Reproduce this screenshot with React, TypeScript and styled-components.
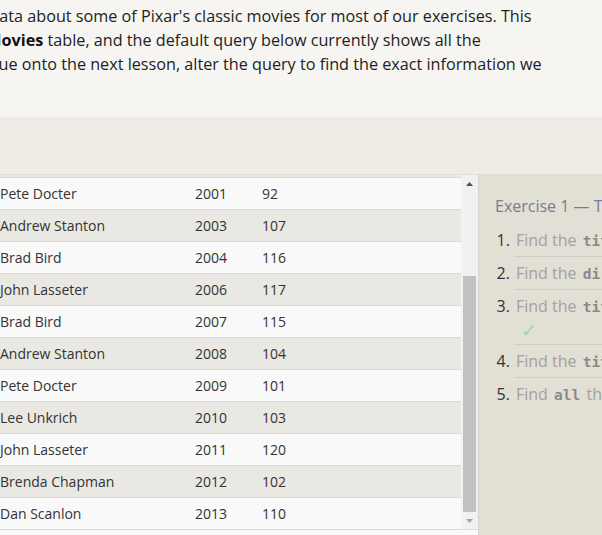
import React from "react";
import styled, { createGlobalStyle } from "styled-components";

const GlobalStyle = createGlobalStyle`
  html, body { margin: 0; padding: 0; background: #f6f5f1; }
  body { font-family: "Open Sans", "Noto Sans", "DejaVu Sans", sans-serif; }
`;

const Page = styled.div`
  width: 100vw;
  height: 535px;
  overflow: hidden;
  display: flex;
  flex-direction: column;
`;

const Intro = styled.section`
  flex: 0 0 117px;
  box-sizing: border-box;
  padding-top: 4px;
  background: #f6f5f1;
  overflow: hidden;
`;

const IntroText = styled.div`
  margin-left: -259px;
  font-size: 16.2px;
  line-height: 24px;
  color: #222;
  strong { color: #111; font-weight: 700; }
`;

const IntroLine = styled.div<{ $shift?: number }>`
  white-space: nowrap;
  margin-left: ${(p) => p.$shift ?? 0}px;
`;

const Band = styled.div`
  flex: 0 0 57px;
  background: #efece5;
  border-bottom: 1px solid #e3e0d8;
`;

const Workspace = styled.div`
  flex: 1;
  display: flex;
  min-height: 0;
`;

const TableArea = styled.div`
  flex: 0 0 478px;
  display: flex;
  flex-direction: column;
  background: #f9f9f9;
`;

const ScrollFrame = styled.div`
  display: flex;
  height: 354px;
`;

const Rows = styled.div`
  flex: 1;
  padding-top: 2px;
  background: #eae8e2;
  overflow: hidden;
`;

const Row = styled.div<{ $alt: boolean }>`
  display: grid;
  grid-template-columns: 195px 67px 1fr;
  height: 32px;
  box-sizing: border-box;
  border-top: 1px solid #dddbd5;
  background: ${(p) => (p.$alt ? "#eae8e2" : "#f9f9f9")};
  font-size: 14px;
  line-height: 31px;
  color: #333;
`;

const Cell = styled.div`
  white-space: nowrap;
  overflow: hidden;
`;

const Scrollbar = styled.div`
  flex: 0 0 17px;
  display: flex;
  flex-direction: column;
  background: #f1f1f1;
`;

const ArrowButton = styled.div`
  flex: 0 0 17px;
  display: flex;
  align-items: center;
  justify-content: center;
`;

const TrackSpace = styled.div`
  flex: 1;
`;

const Thumb = styled.div`
  flex: 0 0 236px;
  margin: 0 2px;
  background: #c1c1c1;
`;

const BelowTable = styled.div`
  flex: 1;
  border-top: 1px solid #dddbd5;
  background: #f9f9f9;
`;

const ExercisePanel = styled.aside`
  flex: 0 0 420px;
  box-sizing: border-box;
  padding: 19px 0 0 17px;
  background: #e2dfd4;
  box-shadow: inset 1px 0 1px rgba(0, 0, 0, 0.05);
`;

const ExerciseTitle = styled.h3`
  margin: 0 0 6px;
  font-size: 16px;
  line-height: 24px;
  font-weight: 400;
  color: #72808e;
  white-space: nowrap;
`;

const TaskList = styled.ol`
  margin: 0;
  padding-left: 19px;
`;

const Task = styled.li`
  padding: 5px 0 5px 2px;
  border-bottom: 1px solid #d0ccc1;
  font-size: 16px;
  line-height: 22px;
  color: #a2a2a2;
  &::marker { color: #333; }
  &:last-child { border-bottom: none; }
`;

const Code = styled.code`
  font-family: "DejaVu Sans Mono", "Liberation Mono", monospace;
  font-weight: 700;
  font-size: 14.5px;
  line-height: 1;
  color: #8a8a8a;
  padding: 0 2px;
`;

const Check = styled.span<{ $ownLine?: boolean }>`
  display: ${(p) => (p.$ownLine ? "block" : "inline")};
  height: ${(p) => (p.$ownLine ? "22px" : "auto")};
  margin-left: ${(p) => (p.$ownLine ? "0" : "6px")};
  padding-left: ${(p) => (p.$ownLine ? "5px" : "0")};
  font-family: "DejaVu Sans", sans-serif;
  font-size: 19px;
  line-height: ${(p) => (p.$ownLine ? "27px" : "1")};
  color: #a3d6a3;
`;

function UpArrow() {
  return (
    <svg width="7" height="4" viewBox="0 0 7 4">
      <polygon points="0,4 7,4 3.5,0" fill="#505050" />
    </svg>
  );
}

function DownArrow() {
  return (
    <svg width="7" height="4" viewBox="0 0 7 4">
      <polygon points="0,0 7,0 3.5,4" fill="#a3a3a3" />
    </svg>
  );
}

const movies = [
  ["Pete Docter", 2001, 92],
  ["Andrew Stanton", 2003, 107],
  ["Brad Bird", 2004, 116],
  ["John Lasseter", 2006, 117],
  ["Brad Bird", 2007, 115],
  ["Andrew Stanton", 2008, 104],
  ["Pete Docter", 2009, 101],
  ["Lee Unkrich", 2010, 103],
  ["John Lasseter", 2011, 120],
  ["Brenda Chapman", 2012, 102],
  ["Dan Scanlon", 2013, 110],
] as const;

export default function App() {
  return (
    <>
      <GlobalStyle />
      <Page>
        <Intro>
          <IntroText>
            <IntroLine>
              We will be using a database with data about some of Pixar's classic movies for most of our exercises. This
            </IntroLine>
            <IntroLine $shift={-6}>
              first exercise will only involve the <strong>Movies</strong> table, and the default query below currently shows all the
            </IntroLine>
            <IntroLine $shift={-9}>
              properties of each movie. To continue onto the next lesson, alter the query to find the exact information we
            </IntroLine>
            <IntroLine>need for each task.</IntroLine>
          </IntroText>
        </Intro>
        <Band />
        <Workspace>
          <TableArea>
            <ScrollFrame>
              <Rows>
                {movies.map(([director, year, length], i) => (
                  <Row key={i} $alt={i % 2 === 1}>
                    <Cell>{director}</Cell>
                    <Cell>{year}</Cell>
                    <Cell>{length}</Cell>
                  </Row>
                ))}
              </Rows>
              <Scrollbar>
                <ArrowButton>
                  <UpArrow />
                </ArrowButton>
                <TrackSpace />
                <Thumb />
                <ArrowButton>
                  <DownArrow />
                </ArrowButton>
              </Scrollbar>
            </ScrollFrame>
            <BelowTable />
          </TableArea>
          <ExercisePanel>
            <ExerciseTitle>Exercise 1 — Tasks</ExerciseTitle>
            <TaskList>
              <Task>
                Find the <Code>title</Code> of each film<Check>✓</Check>
              </Task>
              <Task>
                Find the <Code>director</Code> of each film<Check>✓</Check>
              </Task>
              <Task>
                Find the <Code>title</Code> and <Code>director</Code> of each film
                <Check $ownLine>✓</Check>
              </Task>
              <Task>
                Find the <Code>title</Code> and <Code>year</Code> of each film<Check>✓</Check>
              </Task>
              <Task>
                Find <Code>all</Code> the information about each film<Check>✓</Check>
              </Task>
            </TaskList>
          </ExercisePanel>
        </Workspace>
      </Page>
    </>
  );
}
